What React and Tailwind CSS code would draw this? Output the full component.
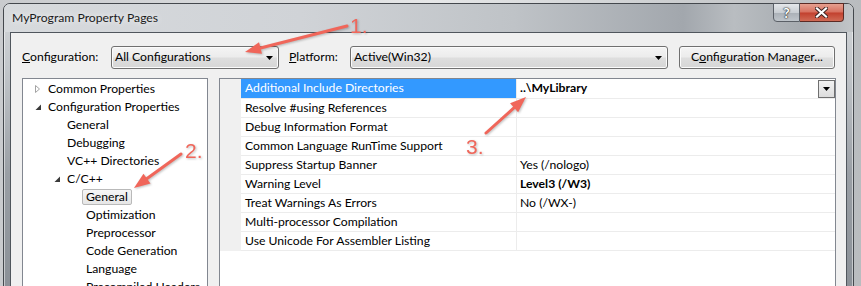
import React from 'react';

const ui = "font-['Lato','Noto_Sans',sans-serif]";

const treeItems = [
  { label: 'Common Properties', level: 0, icon: 'closed' },
  { label: 'Configuration Properties', level: 0, icon: 'open' },
  { label: 'General', level: 1 },
  { label: 'Debugging', level: 1 },
  { label: 'VC++ Directories', level: 1 },
  { label: 'C/C++', level: 1, icon: 'open' },
  { label: 'General', level: 2, selected: true },
  { label: 'Optimization', level: 2 },
  { label: 'Preprocessor', level: 2 },
  { label: 'Code Generation', level: 2 },
  { label: 'Language', level: 2 },
  { label: 'Precompiled Headers', level: 2 },
];

const indent = ['pl-[8px]', 'pl-[27px]', 'pl-[46px]'];

const props = [
  { name: 'Additional Include Directories', value: '..\\MyLibrary', bold: true, selected: true },
  { name: 'Resolve #using References', value: '' },
  { name: 'Debug Information Format', value: '' },
  { name: 'Common Language RunTime Support', value: '' },
  { name: 'Suppress Startup Banner', value: 'Yes (/nologo)' },
  { name: 'Warning Level', value: 'Level3 (/W3)', bold: true },
  { name: 'Treat Warnings As Errors', value: 'No (/WX-)' },
  { name: 'Multi-processor Compilation', value: '' },
  { name: 'Use Unicode For Assembler Listing', value: '' },
];

const DownTri = () => (
  <svg width="7" height="4" viewBox="0 0 7 4">
    <path d="M0 0H7L3.5 4Z" fill="#000" />
  </svg>
);

const TreeIcon = ({ kind }) => {
  if (kind === 'closed')
    return (
      <svg width="13" height="18" viewBox="0 0 13 18">
        <path d="M4.5 5.5L8.5 9L4.5 12.5Z" fill="#fff" stroke="#a3a3a3" />
      </svg>
    );
  if (kind === 'open')
    return (
      <svg width="13" height="18" viewBox="0 0 13 18">
        <path d="M10 6.5V12H4.5Z" fill="#3a3a3a" />
      </svg>
    );
  return <span className="w-[13px]" />;
};

const Combo = ({ text, width }) => (
  <div className={`${width} flex h-[23px] items-center rounded-[3px] border border-[#707070] bg-[linear-gradient(180deg,#f4f4f4_0%,#ececec_48%,#dedede_52%,#d6d6d6_100%)] pr-[5px] pl-[3px] shadow-[inset_0_0_0_1px_#fbfbfb]`}>
    <span className="flex-1 text-[12.2px] text-black">{text}</span>
    <DownTri />
  </div>
);

const Arrow = ({ x1, y1, x2, y2 }) => {
  const dx = x2 - x1;
  const dy = y2 - y1;
  const len = Math.hypot(dx, dy);
  const ux = dx / len;
  const uy = dy / len;
  const hl = 16;
  const hw = 12;
  const bx = x2 - ux * hl;
  const by = y2 - uy * hl;
  const nx = -uy;
  const ny = ux;
  const pts = [
    `${x2},${y2}`,
    `${bx + (nx * hw) / 2},${by + (ny * hw) / 2}`,
    `${bx - (nx * hw) / 2},${by - (ny * hw) / 2}`,
  ].join(' ');
  return (
    <g>
      <line x1={x1} y1={y1} x2={bx + ux * 2} y2={by + uy * 2} stroke="#f0665a" strokeWidth="3" strokeLinecap="round" />
      <polygon points={pts} fill="#f0665a" />
    </g>
  );
};

export default function App() {
  return (
    <div className={`${ui} relative h-[286px] w-[861px] overflow-hidden bg-[linear-gradient(90deg,#c9cbce_0%,#e6e7e8_50%,#b9bcbf_100%)] pt-[3px] pl-[3px]`}>
      <div className="w-[851px] rounded-t-[7px] border border-[#44484d] bg-[linear-gradient(180deg,#d3d6d9_0%,#c3c7cb_20%,#9a9fa5_55%,#878d94_100%)] shadow-[inset_0_0_0_1px_rgba(255,255,255,0.5)]">
        {/* title bar */}
        <div className="flex h-[28px] rounded-t-[6px] bg-[linear-gradient(90deg,#d7dadd_0%,#d0d3d7_35%,#bfc3c7_60%,#a2a7ad_80%,#b9bdc1_86%,#a6abb0_94%,#c2c5c8_100%)]">
          <div className="flex h-[28px] items-center pl-[8px] text-[12.2px] text-[#1b1b1b] [text-shadow:0_0_6px_#fff]">
            MyProgram Property Pages
          </div>
          <div className="mr-[9px] ml-auto flex h-[19px] -mt-[1px]">
            <div className="flex w-[27px] items-center justify-center rounded-bl-[4px] border border-[#5b6067] bg-[linear-gradient(180deg,#e4e7ea_0%,#c9ced3_50%,#aab0b7_52%,#bfc5cb_100%)]">
              <span className="text-[14px] leading-none font-bold text-white [text-shadow:0_0_1px_#333,0_0_1px_#333,0_0_2px_#333]">?</span>
            </div>
            <div className="flex w-[44px] items-center justify-center rounded-br-[4px] border border-l-0 border-[#5b2a24] bg-[linear-gradient(180deg,#e6a090_0%,#d7705f_48%,#c2402e_52%,#d06a55_100%)]">
              <svg width="13" height="11" viewBox="0 0 13 11">
                <path d="M2 1.5L11 9.5M11 1.5L2 9.5" stroke="#3a2220" strokeWidth="4" strokeLinecap="square" />
                <path d="M2 1.5L11 9.5M11 1.5L2 9.5" stroke="#fff" strokeWidth="2.2" strokeLinecap="square" />
              </svg>
            </div>
          </div>
        </div>

        {/* client area */}
        <div className="mx-[6px] h-[280px] border border-[#50565d] bg-[#f0f0f0] pt-[13px]">
          <div className="flex h-[23px] items-center pl-[11px] text-[12.2px] text-black">
            <span className="w-[89px]"><span className="underline">C</span>onfiguration:</span>
            <Combo text="All Configurations" width="w-[168px]" />
            <span className="ml-[10px] w-[61px]"><span className="underline">P</span>latform:</span>
            <Combo text="Active(Win32)" width="w-[318px]" />
            <div className="ml-[11px] flex h-[23px] w-[156px] items-center justify-center rounded-[3px] border border-[#707070] bg-[linear-gradient(180deg,#f4f4f4_0%,#ececec_48%,#dedede_52%,#d6d6d6_100%)] shadow-[inset_0_0_0_1px_#fbfbfb]">
              C<span className="underline">o</span>nfiguration Manager...
            </div>
          </div>

          <div className="mt-[9px] flex gap-[11px] pl-[11px]">
            {/* tree */}
            <div className="h-[230px] w-[186px] border border-[#828790] bg-white pt-[1px] text-[12.2px] text-black">
              {treeItems.map((it, i) => (
                <div key={i} className={`flex h-[18px] items-center ${indent[it.level]}`}>
                  <TreeIcon kind={it.icon} />
                  <span
                    className={`flex h-[16px] items-center rounded-[2px] border px-[3px] whitespace-nowrap ${
                      it.selected
                        ? 'border-[#b9b9b9] bg-[linear-gradient(180deg,#f6f6f6_0%,#e6e6e6_100%)]'
                        : 'border-transparent'
                    }`}
                  >
                    {it.label}
                  </span>
                </div>
              ))}
            </div>

            {/* property grid */}
            <div className="h-[230px] w-[617px] border border-[#828790] bg-white text-[12.2px] text-black">
              {props.map((p, i) => (
                <div key={i} className={`flex ${i === 0 ? 'h-[20px]' : 'h-[19px]'}`}>
                  <div className="w-[21px] bg-[#f0f0f0]" />
                  <div
                    className={`flex w-[276px] items-center border-r border-b border-r-[#ececec] border-b-[#ececec] pl-[4px] whitespace-nowrap ${
                      p.selected ? 'bg-[#3399ff] text-white' : ''
                    }`}
                  >
                    {p.name}
                  </div>
                  <div className={`flex flex-1 items-center border-b border-[#ececec] pl-[3px] ${p.bold ? 'font-bold' : ''}`}>
                    <span className="flex-1">{p.value}</span>
                    {p.selected && (
                      <div className="flex h-[18px] w-[17px] items-center justify-center border border-[#6f6f6f] bg-[linear-gradient(180deg,#f2f2f2_0%,#dcdcdc_100%)]">
                        <DownTri />
                      </div>
                    )}
                  </div>
                </div>
              ))}
            </div>
          </div>
        </div>
      </div>

      {/* annotations */}
      <svg className="pointer-events-none absolute top-0 left-0 drop-shadow-[1px_1px_1px_rgba(0,0,0,0.25)]" width="861" height="286">
        <Arrow x1={347} y1={26} x2={245} y2={52} />
        <Arrow x1={181} y1={154} x2={134} y2={188} />
        <Arrow x1={486} y1={133} x2={526} y2={97} />
        <text x="350" y="33" fill="#f0665a" fontSize="21" fontFamily="Liberation Sans, Arial, sans-serif">1.</text>
        <text x="185" y="158" fill="#f0665a" fontSize="21" fontFamily="Liberation Sans, Arial, sans-serif">2.</text>
        <text x="466" y="154" fill="#f0665a" fontSize="21" fontFamily="Liberation Sans, Arial, sans-serif">3.</text>
      </svg>
    </div>
  );
}
